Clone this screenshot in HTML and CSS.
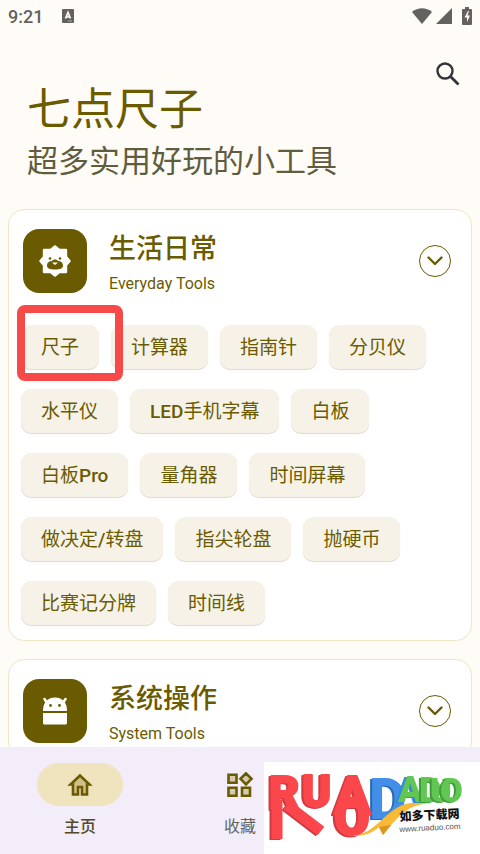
FILE: index.html
```html
<!DOCTYPE html>
<html lang="zh-CN">
<head>
<meta charset="utf-8">
<meta name="viewport" content="width=device-width, initial-scale=1">
<title>七点尺子</title>
<link rel="stylesheet" href="styles.css">
</head>
<body>
<div class="statusbar">
  <span class="clock">9:21</span>
  <svg width="14" height="14" viewBox="0 0 14 14" aria-hidden="true"><rect x="1" width="12" height="14" rx="1" fill="#636260"/><path d="M4.500 9.500 7 3.500l2.500 6M5.300 8h3.400" fill="none" stroke="#fffcf7" stroke-width="1.700"/><path d="M7 12h4" stroke="#aaa8a4"/></svg>
  <span class="status-icons">
    <svg width="20" height="16" viewBox="0 0 20 16" aria-hidden="true"><path d="M10 16 0 4C6-1 14-1 20 4Z" fill="#636260"/></svg>
    <svg width="16" height="16" viewBox="0 0 16 16" aria-hidden="true"><path d="M16 0v16H0Z" fill="#636260"/></svg>
    <svg class="battery" width="10" height="18" viewBox="0 0 10 18" aria-hidden="true"><path d="M3 0h4v2h2q1 0 1 1v14q0 1-1 1H1q-1 0-1-1V3q0-1 1-1h2Z" fill="#636260"/><path d="M6 4 2.500 10.500H5V15l3-6.500H5.500L7 4Z" fill="#fffcf7"/></svg>
  </span>
</div>
<header class="header">
  <button class="search" type="button" aria-label="搜索"><svg width="24" height="24" viewBox="0 0 24 24" aria-hidden="true"><circle cx="9" cy="9" r="7.500" fill="none" stroke="#35323c" stroke-width="2.400"/><path d="m14.500 14.500 8 8" stroke="#35323c" stroke-width="2.800"/></svg></button>
  <h1>七点尺子</h1>
  <p>超多实用好玩的小工具</p>
</header>
<main class="cards">
  <section class="card">
    <div class="card-head">
      <span class="tile"><svg width="32" height="32" viewBox="0 0 32 32" aria-hidden="true"><path d="m16 1.500 4.300 3.500h6.700v6.700L30.500 16 27 20.300V27h-6.700L16 30.500 11.700 27H5v-6.700L1.500 16 5 11.700V5h6.700Z" fill="#fff" stroke="#fff" stroke-width="2.400" stroke-linejoin="round"/><path d="M13 16c1-2 5-2 6 0 3 0 5 2 5 4.500 0 3-3 4-8 4s-8-1-8-4 2-4.500 5-4.500Z" fill="#6b5b00"/><circle cx="11" cy="13.500" r="1.300" fill="#6b5b00"/><circle cx="21" cy="13.500" r="1.300" fill="#6b5b00"/><path d="M13 17.500h6L16 20Z" fill="#fff"/></svg></span>
      <div class="names"><h2>生活日常</h2><p>Everyday Tools</p></div>
      <button class="toggle" type="button" aria-label="展开"><svg width="16" height="10" viewBox="0 0 16 10" aria-hidden="true"><path d="m1.500 1.500 6.500 6.500 6.500-6.500"/></svg></button>
    </div>
    <div class="chips">
      <button class="chip marked" type="button">尺子</button>
      <button class="chip" type="button">计算器</button>
      <button class="chip" type="button">指南针</button>
      <button class="chip" type="button">分贝仪</button>
      <button class="chip" type="button">水平仪</button>
      <button class="chip" type="button"><b>LED</b>手机字幕</button>
      <button class="chip" type="button">白板</button>
      <button class="chip" type="button">白板<b>Pro</b></button>
      <button class="chip" type="button">量角器</button>
      <button class="chip" type="button">时间屏幕</button>
      <button class="chip" type="button">做决定<b>/</b>转盘</button>
      <button class="chip" type="button">指尖轮盘</button>
      <button class="chip" type="button">抛硬币</button>
      <button class="chip" type="button">比赛记分牌</button>
      <button class="chip" type="button">时间线</button>
    </div>
  </section>
  <section class="card">
    <div class="card-head">
      <span class="tile"><svg width="26" height="30" viewBox="0 0 26 30" aria-hidden="true"><path d="m4.500 6-2-3M21.500 6l2-3" stroke="#fff" stroke-width="2.600" stroke-linecap="round"/><path d="M1 15C1 6 6 1.500 13 1.500S25 6 25 15Z" fill="#fff"/><path d="M1 17h24v10q0 1.500-1.500 1.500h-21Q1 28.500 1 27Z" fill="#fff"/><circle cx="8.500" cy="9.500" r="1.400" fill="#6b5b00"/><circle cx="17.500" cy="9.500" r="1.400" fill="#6b5b00"/></svg></span>
      <div class="names"><h2>系统操作</h2><p>System Tools</p></div>
      <button class="toggle" type="button" aria-label="展开"><svg width="16" height="10" viewBox="0 0 16 10" aria-hidden="true"><path d="m1.500 1.500 6.500 6.500 6.500-6.500"/></svg></button>
    </div>
  </section>
</main>
<nav class="nav">
  <a class="tab active" href="#home"><span class="pill"><svg width="26" height="24" viewBox="0 0 26 24" aria-hidden="true"><path d="M13 2.500 3.500 11.500H6V21.500h5V14h4v7.500h5v-10h2.500Z" fill="#cfc08a" stroke="#6b5b00" stroke-width="2.600"/></svg></span><span>主页</span></a>
  <a class="tab" href="#favorites"><span class="pill"><svg width="28" height="26" viewBox="0 0 28 26" aria-hidden="true"><g fill="#d3cbb4" stroke="#6b5b00" stroke-width="2.600"><path d="M2.500 2.700h8v8h-8ZM2.500 15.700h8v8h-8ZM16 15.700h8v8h-8ZM20 1.300l5.500 5.500-5.500 5.500-5.500-5.500Z"/></g></svg></span><span>收藏</span></a>
</nav>
<aside class="watermark">
  <svg width="216" height="92" viewBox="264 762 216 92" role="img" aria-label="如多下载网">
    <g class="letters">
      <text class="blue" x="369" y="819" font-size="58">D</text>
      <g class="red"><text x="302" y="807" font-size="44">U</text></g>
      <g class="red">
        <path d="M277 800v39M287 805l34 26" fill="none" stroke="#fb474b" stroke-width="11"/>
        <text x="269" y="809" font-size="47">R</text>
      </g>
      <g class="red">
        <text x="334" y="814" font-size="54">A</text>
        <text x="334" y="835" font-size="52">O</text>
      </g>
      <text class="green half" x="398" y="802" font-size="36">A</text>
      <g class="green"><text x="419" y="802" font-size="35">D</text><text x="430" y="802" font-size="33">U</text><text x="440" y="802" font-size="33">O</text></g>
    </g>
    <path d="M352 836c27-2 35-33 62-33h17c-25 2-31 12-48 32l-4-8c-8 7-15 9-27 9Z" fill="#f8b936"/>
    <path d="m379 827 4 8 8-10Z" fill="#dc9520"/>
    <g transform="rotate(-3 399 824)"><text class="site" x="400" y="821">如多下载网</text><text class="url" x="399" y="832">www.ruaduo.com</text></g>
  </svg>
</aside>
</body>
</html>
```
FILE: styles.css
```css
:root {
  --olive: #6b5b00;
  --bg: #fffcf7;
}

* { box-sizing: border-box; }

body {
  margin: 0;
  height: 100vh;
  overflow: hidden;
  display: flex;
  flex-direction: column;
  background: var(--bg);
  color: var(--olive);
  font-family: Roboto, "Noto Sans CJK SC", sans-serif;
}

h1, h2, p { margin: 0; font-weight: 400; }
button { border: 0; padding: 0; font: inherit; color: inherit; background: none; }
svg { display: block; }

.statusbar {
  flex: none;
  display: flex;
  align-items: center;
  gap: 18px;
  height: 32px;
  padding: 0 8px;
  color: #636260;
}
.clock { font-size: 18px; font-weight: 500; }
.status-icons { display: flex; align-items: center; gap: 4px; margin-left: auto; }
.battery { margin-left: 6px; }

.header {
  flex: none;
  display: flex;
  flex-direction: column;
  padding: 30px 20px 27px 27px;
}
.search { align-self: flex-end; height: 24px; }
.header h1 { font-size: 44px; line-height: 48px; }
.header p { font-size: 31px; line-height: 40px; margin-top: 8px; color: #5f5d3d; }

.cards {
  flex: 1;
  min-height: 0;
  overflow: hidden;
  display: flex;
  flex-direction: column;
  gap: 18px;
  padding: 0 8px;
}
.card {
  flex: none;
  padding: 19px 12px 15px;
  background: #fff;
  border: 1px solid #efe6c4;
  border-radius: 16px;
}
.card-head {
  display: flex;
  align-items: center;
  gap: 22px;
  padding: 0 8px 0 2px;
}
.tile {
  display: grid;
  place-items: center;
  width: 64px;
  height: 64px;
  border-radius: 16px;
  background: var(--olive);
}
.names { flex: 1; padding-top: 2px; }
.names h2 { font-size: 27px; line-height: 36px; font-weight: 500; }
.names p { font-size: 16px; line-height: 18px; margin-top: 8px; }
.toggle {
  display: grid;
  place-items: center;
  width: 32px;
  height: 32px;
  border: 1px solid var(--olive);
  border-radius: 50%;
}
.toggle path { fill: none; stroke: var(--olive); stroke-width: 2.4; stroke-linecap: round; stroke-linejoin: round; }

.chips {
  display: flex;
  flex-wrap: wrap;
  gap: 20px 12px;
  margin-top: 32px;
}
.chip {
  position: relative;
  height: 44px;
  padding: 0 20px 4px;
  border-radius: 10px;
  background: #f7f2e8;
  box-shadow: 0 1px 1px #dcd9d4;
  font-size: 19px;
  white-space: nowrap;
}
.chip b { font-weight: 500; }
.marked::after {
  content: "";
  position: absolute;
  inset: -20px -24px -12px -4px;
  border: 8px solid #f54a48;
  border-radius: 8px;
  z-index: 1;
}

.nav {
  flex: none;
  display: grid;
  grid-template-columns: repeat(3, 1fr);
  height: 107px;
  padding-top: 16px;
  background: #f2edf8;
}
.tab {
  display: flex;
  flex-direction: column;
  align-items: center;
  gap: 9px;
  color: #67645c;
  font-size: 16px;
  line-height: 24px;
  text-decoration: none;
}
.active { color: #514a28; font-weight: 500; }
.pill {
  display: grid;
  place-items: center;
  width: 86px;
  height: 43px;
  border-radius: 22px;
}
.active .pill { background: #efe4bd; }

.watermark {
  position: fixed;
  right: 0;
  bottom: 0;
  background: #fff;
}
.letters { font-family: Roboto, sans-serif; font-weight: 900; }
.red { fill: #fb474b; filter: drop-shadow(-2px 1px 0 #cf3a43); }
.red text { stroke: #fb474b; stroke-width: 2; stroke-linejoin: round; }
.blue { fill: #438fe8; filter: drop-shadow(-2px 1px 0 #2569b5); }
.green { fill: #62c752; }
.green text { filter: drop-shadow(-2px 1px 0 #3b9d3c); }
.half { filter: drop-shadow(-3px 1px 0 #318cdb); }
.site { font-family: "Noto Sans CJK SC", sans-serif; font-size: 12px; font-weight: 900; fill: #111; }
.url { font-family: "Liberation Sans", sans-serif; font-size: 8px; fill: #555; }
```
